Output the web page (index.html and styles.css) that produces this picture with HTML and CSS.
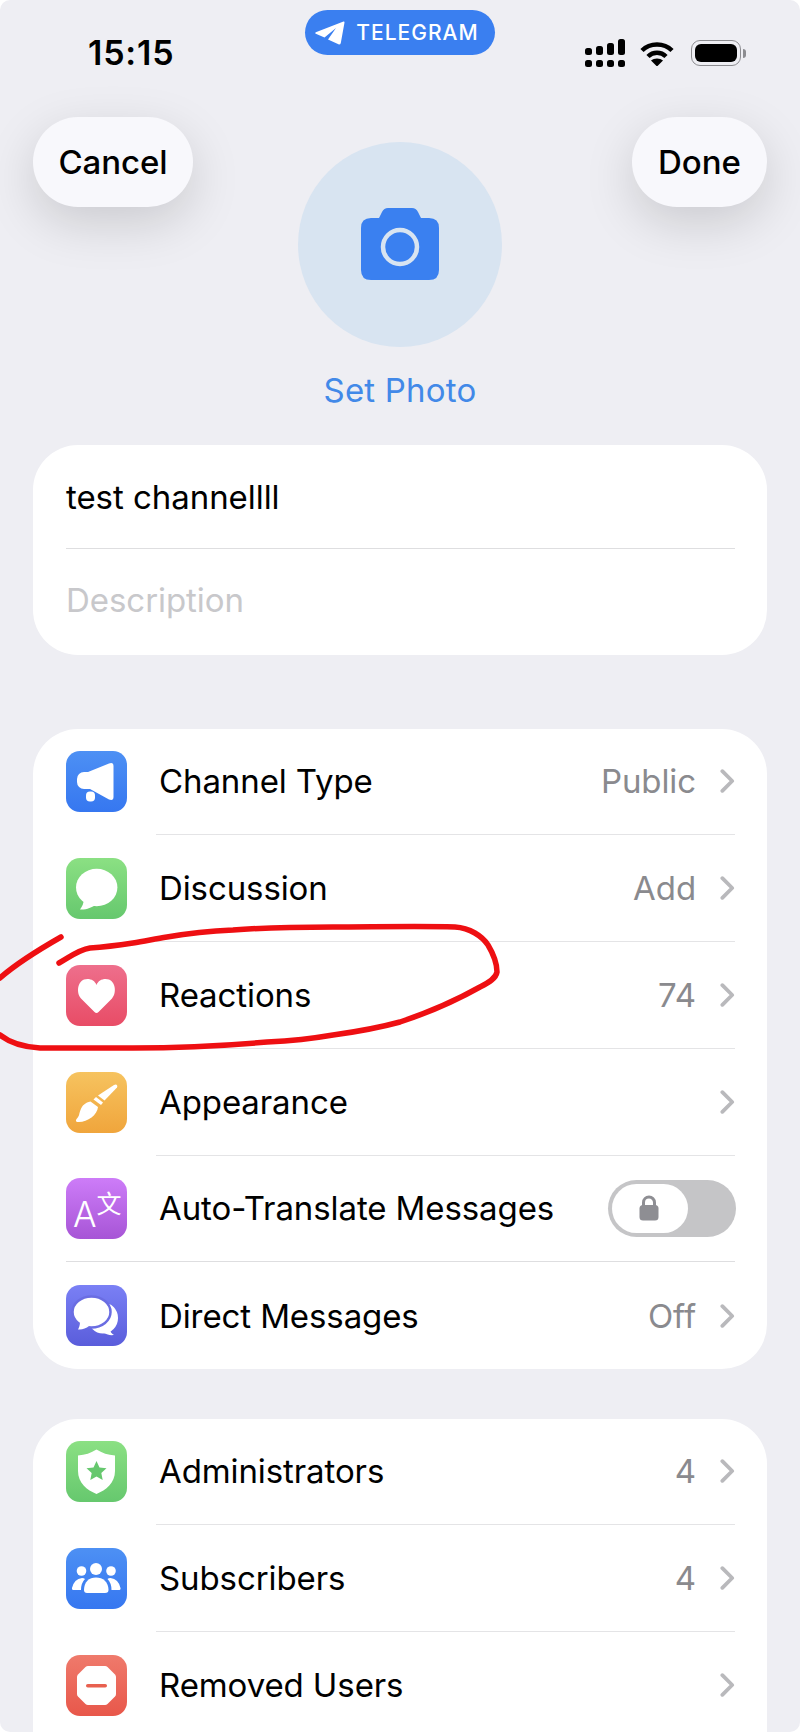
FILE: index.html
```html
<!DOCTYPE html>
<html>
    <head>
        <meta charset="UTF-8">
        <title>Edit Channel</title>
        <link rel="stylesheet" href="styles.css">
    </head>
    <body>
        <div class="screen">
            <div class="status">
                <div class="time">15:15</div>
                <div class="pill">
                    <svg width="30" height="24" viewBox="0 0 30 24"><path fill="#fff" d="M28.5.5.8 11.2q-1.1.8 0 1.6l8.700 3.700L21 7l-8 11.500 11 5q1.500 0 1.800-1.500l3.700-20.500q0-1.500-1-1z"/></svg>
                    <span>TELEGRAM</span>
                </div>
                <div class="status-icons">
                    <svg width="40" height="28" viewBox="0 0 40 28" fill="#000">
                        <rect x="0" y="9" width="7" height="7" rx="2.500"/>
                        <rect x="11" y="7" width="7" height="9" rx="2.500"/>
                        <rect x="22" y="4" width="7" height="12" rx="2.500"/>
                        <rect x="33" y="0" width="7" height="16" rx="2.500"/>
                        <rect x="0" y="21" width="7" height="7" rx="2.500"/>
                        <rect x="11" y="21" width="7" height="7" rx="2.500"/>
                        <rect x="22" y="21" width="7" height="7" rx="2.500"/>
                        <rect x="33" y="21" width="7" height="7" rx="2.500"/>
                    </svg>
                    <svg width="34" height="26" viewBox="0 0 34 26">
                        <path fill="none" stroke="#000" stroke-width="4.500" d="M2 10.500C10 2.500 24 2.500 32 10.500"/>
                        <path fill="none" stroke="#000" stroke-width="4.500" d="M8 16.500C13 11.500 21 11.500 26 16.500"/>
                        <path fill="#000" d="M11 20.500C14 17.800 20 17.800 23 20.500L17 26.500z"/>
                    </svg>
                    <div class="battery"><div class="battery-fill"></div></div>
                    <div class="battery-cap"></div>
                </div>
            </div>

            <div class="header">
                <div class="btn btn-cancel">Cancel</div>
                <div class="avatar-col">
                    <div class="avatar">
                        <svg class="camera" width="78" height="72" viewBox="0 0 78 72">
                            <path fill="#3a80f0" d="M18 10l3-6q2-4 6-4h24q4 0 6 4l3 6h8q10 0 10 10v42q0 10-10 10H10Q0 72 0 62V20q0-10 10-10z"/>
                            <circle cx="39" cy="39" r="17" fill="none" stroke="#d8e4f1" stroke-width="4.500"/>
                        </svg>
                    </div>
                    <div class="set-photo">Set Photo</div>
                </div>
                <div class="btn btn-done">Done</div>
            </div>

            <div class="card card-info">
                <div class="field field-name"><span>test channellll</span></div>
                <div class="field field-desc"><span>Description</span></div>
            </div>

            <div class="card">
                <div class="row">
                    <div class="icon icon-blue">
                        <svg viewBox="0 0 61 61"><path fill="#fff" d="M43 12.500 22 21h-4a7 7 0 0 0-7 7v3a7 7 0 0 0 7 7h6l19 10.500q4.500 1.500 4.500-2.500V15q0-4-4.500-2.500z"/><rect x="20" y="40.500" width="9" height="10" rx="4" fill="#fff"/></svg>
                    </div>
                    <div class="row-body">
                        <span class="label">Channel Type</span>
                        <span class="value">Public</span>
                        <svg class="chevron" viewBox="0 0 16 26"><path d="M2.500 2.500 13 13 2.500 23.500"/></svg>
                    </div>
                </div>
                <div class="row">
                    <div class="icon icon-green">
                        <svg viewBox="0 0 61 61"><ellipse cx="30.700" cy="29.500" rx="20.700" ry="18.800" fill="#fff"/><path fill="#fff" d="M18 40c0 5-2 9-4 11.500 6 .5 12-2 16-5z"/></svg>
                    </div>
                    <div class="row-body">
                        <span class="label">Discussion</span>
                        <span class="value">Add</span>
                        <svg class="chevron" viewBox="0 0 16 26"><path d="M2.500 2.500 13 13 2.500 23.500"/></svg>
                    </div>
                </div>
                <div class="row">
                    <div class="icon icon-red">
                        <svg viewBox="0 0 61 61"><path fill="#fff" d="M30.500 48q-1 0-2-1L15 33.500C10 28 11 14 21.500 14c4 0 7.500 2 9 6 1.500-4 5-6 9-6C50 14 51 28 46 33.500L32.500 47q-1 1-2 1z"/></svg>
                    </div>
                    <div class="row-body">
                        <span class="label">Reactions</span>
                        <span class="value">74</span>
                        <svg class="chevron" viewBox="0 0 16 26"><path d="M2.500 2.500 13 13 2.500 23.500"/></svg>
                    </div>
                </div>
                <div class="row">
                    <div class="icon icon-orange">
                        <svg viewBox="0 0 61 61"><path fill="#fff" d="M48 13c2.500-1.500 4 .5 3 2.500L38.500 28.500 32 23.500z"/><path fill="#fff" d="m30 25 7 5.500-2 2.500-7.500-5.500z"/><path fill="#fff" d="M24.500 29.500l7.500 5.500c-.5 8-11 15.500-20 15-2.500 0-2.500-2-1-3.500 2.500-2.500 2-5 3.500-8.500 1.500-4.500 5-7.500 10-8.500z"/></svg>
                    </div>
                    <div class="row-body">
                        <span class="label">Appearance</span>
                        <svg class="chevron" viewBox="0 0 16 26"><path d="M2.500 2.500 13 13 2.500 23.500"/></svg>
                    </div>
                </div>
                <div class="row row-wide">
                    <div class="icon icon-purple">
                        <svg viewBox="0 0 61 61"><text x="7" y="49" class="glyph">A<tspan class="glyph-zh" dy="-14">文</tspan></text></svg>
                    </div>
                    <div class="row-body">
                        <span class="label">Auto-Translate Messages</span>
                        <div class="toggle">
                            <div class="knob">
                                <svg class="lock" width="20" height="26" viewBox="0 0 20 26"><path fill="none" stroke="#8e8e93" stroke-width="3" d="M4.500 11V7.500a5.500 5.500 0 0 1 11 0V11"/><rect x="0.500" y="10" width="19" height="15.500" rx="3.500" fill="#8e8e93"/></svg>
                            </div>
                        </div>
                    </div>
                </div>
                <div class="row">
                    <div class="icon icon-indigo">
                        <svg viewBox="0 0 61 61"><ellipse cx="37" cy="33" rx="15" ry="15.500" fill="#fff"/><path fill="#fff" d="M44 44c0 3 2 5 4 6-4 .5-8-.5-12-3z"/><ellipse cx="25.500" cy="27" rx="19" ry="15.500" fill="#fff" stroke="#6a6de2" stroke-width="2.500"/><path fill="#fff" d="M14 37c0 3-1 6-2 7.500 4 .5 8-1 11-3.500z"/></svg>
                    </div>
                    <div class="row-body row-last">
                        <span class="label">Direct Messages</span>
                        <span class="value">Off</span>
                        <svg class="chevron" viewBox="0 0 16 26"><path d="M2.500 2.500 13 13 2.500 23.500"/></svg>
                    </div>
                </div>
            </div>

            <div class="card card-last">
                <div class="row">
                    <div class="icon icon-green">
                        <svg viewBox="0 0 61 61"><path fill="#fff" d="M30.500 8.500c5.500 3.500 11.500 5.500 18.500 6V30c0 12-9 19-18.500 23C21 49 12 42 12 30V14.500c7-.5 13-2.500 18.500-6z"/><path fill="#66c86e" d="m30.500 20 3 6.500 7 .8-5.200 4.800 1.400 7-6.200-3.500-6.200 3.500 1.400-7-5.200-4.800 7-.8z"/></svg>
                    </div>
                    <div class="row-body">
                        <span class="label">Administrators</span>
                        <span class="value">4</span>
                        <svg class="chevron" viewBox="0 0 16 26"><path d="M2.500 2.500 13 13 2.500 23.500"/></svg>
                    </div>
                </div>
                <div class="row">
                    <div class="icon icon-blue">
                        <svg viewBox="0 0 61 61" fill="#fff"><circle cx="30" cy="21" r="6"/><circle cx="15.500" cy="23" r="4.800"/><circle cx="45" cy="23" r="4.800"/><path d="M18 42c0-8 5-12.500 12-12.500S42.500 34 42.500 42q0 3-3.500 3H21q-3 0-3-3z"/><path d="M16 30q-8 1-10 10-.5 2 2 2h7q0-7 4-11-1-1-3-1z"/><path d="M44.500 30q8 1 10 10 .5 2-2 2h-7q0-7-4-11 1-1 3-1z"/></svg>
                    </div>
                    <div class="row-body">
                        <span class="label">Subscribers</span>
                        <span class="value">4</span>
                        <svg class="chevron" viewBox="0 0 16 26"><path d="M2.500 2.500 13 13 2.500 23.500"/></svg>
                    </div>
                </div>
                <div class="row">
                    <div class="icon icon-coral">
                        <svg viewBox="0 0 61 61"><path fill="#fff" d="M22 11h17q1.500 0 2.500 1L49 19.500q1 1 1 2.500v17q0 1.500-1 2.500L41.500 49q-1 1-2.500 1H22q-1.500 0-2.500-1L12 41.500q-1-1-1-2.500V22q0-1.500 1-2.500L19.500 12q1-1 2.500-1z"/><rect x="20" y="29" width="21" height="3.500" rx="1.750" fill="#e8604f"/></svg>
                    </div>
                    <div class="row-body">
                        <span class="label">Removed Users</span>
                        <svg class="chevron" viewBox="0 0 16 26"><path d="M2.500 2.500 13 13 2.500 23.500"/></svg>
                    </div>
                </div>
            </div>

            <!-- red marker scribbled over the screenshot -->
            <svg class="scribble" width="800" height="1732" viewBox="0 0 800 1732">
                <path d="M61 937C40 949 18 962 0 978"/>
                <path d="M59 963C70 957 78 950 90 948C105 947 120 945 133 943C145 941 155 939 167 937C190 933 210 931 233 930C270 927 300 927 333 927C370 927 420 926 455 927C470 928 482 936 488 945C494 955 497 965 497 972C496 978 490 982 480 987C455 1001 430 1012 400 1022C378 1028 355 1032 333 1035C310 1039 288 1041 267 1042C222 1046 178 1048 133 1048C100 1048 65 1048 40 1048C22 1047 10 1043 0 1035"/>
            </svg>
        </div>
    </body>
</html>
```

FILE: styles.css
```css
html, body {
    margin: 0;
    padding: 0;
    background-color: #fff;
}
.screen {
    position: relative;
    width: 800px;
    height: 1732px;
    overflow: hidden;
    background-color: #eeeef3;
    border-radius: 10px;
    font-family: 'Inter', sans-serif;
    color: #000;
}
.status {
    display: grid;
    grid-template-columns: 1fr auto 1fr;
    height: 117px;
}
.time {
    margin: 34px 0 0 88px;
    font-size: 34px;
    line-height: 38px;
    font-weight: 600;
    letter-spacing: 0.8px;
}
.pill {
    display: flex;
    align-items: center;
    gap: 11px;
    align-self: start;
    height: 45px;
    margin-top: 10px;
    padding: 0 16px 0 10px;
    background-color: #3a7ff0;
    border-radius: 23px;
    color: #fff;
    font-size: 21px;
    font-weight: 500;
    letter-spacing: 1px;
}
.status-icons {
    display: flex;
    align-items: center;
    justify-content: flex-end;
    align-self: start;
    gap: 15px;
    height: 28px;
    margin-top: 39px;
    padding-right: 54px;
}
.battery {
    box-sizing: border-box;
    width: 50px;
    height: 26px;
    margin-left: 2px;
    padding: 3px;
    border: 1.5px solid #8c8c90;
    border-radius: 9px;
}
.battery-fill {
    width: 100%;
    height: 100%;
    background-color: #000;
    border-radius: 6px;
}
.battery-cap {
    width: 3px;
    height: 9px;
    margin-left: -13px;
    background-color: #8c8c90;
    border-radius: 0 3px 3px 0;
}
.header {
    display: grid;
    grid-template-columns: 1fr auto 1fr;
    height: 328px;
    padding: 0 33px;
}
.btn {
    display: flex;
    align-items: center;
    justify-content: center;
    height: 90px;
    background-color: #f8f8fc;
    border-radius: 45px;
    box-shadow: 0 16px 50px rgba(0, 0, 0, 0.15);
    font-size: 33px;
    font-weight: 500;
    letter-spacing: -0.05px;
}
.btn-cancel {
    width: 160px;
    justify-self: start;
}
.btn-done {
    width: 135px;
    justify-self: end;
}
.avatar-col {
    display: flex;
    flex-direction: column;
    align-items: center;
    padding-top: 25px;
}
.avatar {
    display: flex;
    align-items: center;
    justify-content: center;
    width: 204px;
    height: 205px;
    background-color: #d8e4f1;
    border-radius: 50%;
}
.camera {
    margin-bottom: 2px;
}
.set-photo {
    margin-top: 23px;
    font-size: 33px;
    line-height: 40px;
    color: #4289e8;
    letter-spacing: 0.2px;
}
.card {
    margin: 0 33px 49.5px;
    background-color: #fff;
    border-radius: 45px;
}
.card-info {
    height: 210px;
    margin-bottom: 73.5px;
}
.card-last {
    margin-bottom: 0;
    height: 400px;
}
.field {
    display: flex;
    align-items: center;
    margin: 0 32px 0 33px;
    font-size: 33px;
    letter-spacing: -0.05px;
}
.field-name {
    height: 103px;
    border-bottom: 1.5px solid #dedee0;
}
.field-desc {
    height: 102px;
    color: #c8c8cb;
}
.row {
    display: flex;
    align-items: center;
    height: 106.75px;
    padding-left: 33px;
}
.row-wide {
    box-sizing: border-box;
    margin: 0 32px 0 33px;
    padding-left: 0;
    border-bottom: 1.5px solid #dedee0;
}
.row-wide .row-body {
    margin-right: -1px;
    border-bottom: none;
}
.row-body {
    box-sizing: border-box;
    display: flex;
    align-items: center;
    flex: 1;
    height: 100%;
    margin: 0 32px 0 29px;
    padding-left: 3px;
    border-bottom: 1.5px solid #e4e4e6;
}
.row-last {
    border-bottom: none;
}
.label {
    flex: 1;
    font-size: 33px;
    letter-spacing: -0.1px;
}
.value {
    margin-right: 24px;
    font-size: 33px;
    letter-spacing: -0.1px;
    color: #8a8a8e;
}
.chevron {
    width: 15px;
    height: 26px;
    fill: none;
    stroke: #b9b9bc;
    stroke-width: 4;
    stroke-linecap: round;
    stroke-linejoin: round;
}
.icon {
    flex: none;
    width: 61px;
    height: 61px;
    border-radius: 14px;
}
.icon svg {
    display: block;
    width: 61px;
    height: 61px;
}
.icon-blue {
    background: linear-gradient(#4d90f4, #3677f0);
}
.icon-green {
    background: linear-gradient(#8be083, #66c86e);
}
.icon-red {
    background: linear-gradient(#ee6f8c, #e84c66);
}
.icon-orange {
    background: linear-gradient(#f6c35f, #f0a53c);
}
.icon-purple {
    background: linear-gradient(#cd7cf8, #a755d6);
}
.icon-indigo {
    background: linear-gradient(#7a80f5, #5a5ddb);
}
.icon-coral {
    background: linear-gradient(#ef7a6c, #e8574a);
}
.glyph {
    font-family: 'Inter', sans-serif;
    font-size: 35px;
    font-weight: 300;
    fill: #fff;
}
.glyph-zh {
    font-family: 'Noto Sans CJK SC', sans-serif;
    font-size: 25px;
    font-weight: 400;
}
.toggle {
    box-sizing: border-box;
    width: 128px;
    height: 57px;
    padding: 4px;
    background-color: #c5c5c7;
    border-radius: 29px;
}
.knob {
    display: flex;
    align-items: center;
    justify-content: center;
    width: 76px;
    height: 49px;
    background-color: #fff;
    border-radius: 25px;
}
.lock {
    margin-right: 2px;
}
.scribble {
    position: absolute;
    top: 0;
    left: 0;
    fill: none;
    stroke: #ee0f12;
    stroke-width: 5.5;
    stroke-linecap: round;
    stroke-linejoin: round;
}
```
